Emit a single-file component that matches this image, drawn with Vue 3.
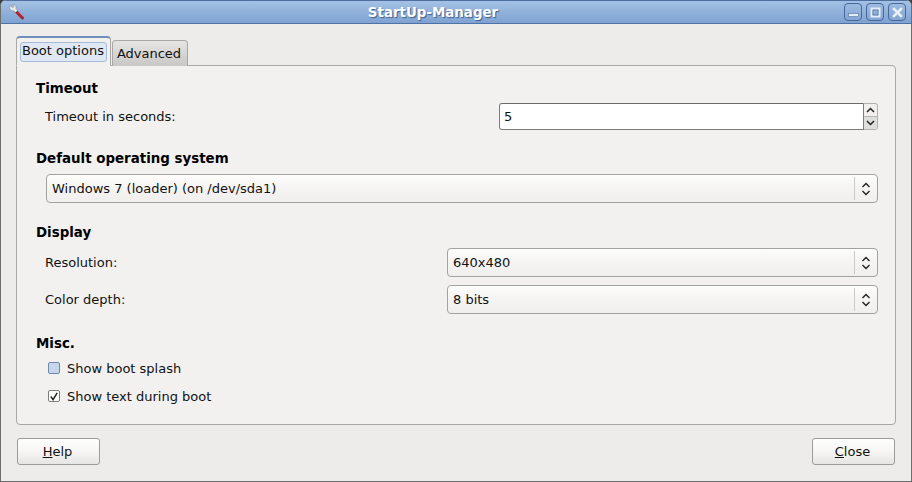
<template>
  <div class="window">
    <div class="titlebar">
      <svg class="app-icon" width="18" height="18" viewBox="0 0 18 18">
        <path d="M9 9.5 L15.5 16" stroke="#b3222c" stroke-width="3" stroke-linecap="round" />
        <path d="M2.5 3 L5 5.5 L7 4.5 L5.5 2.5 C8 2 9.5 4 9 6.5 L10.5 8.5 L8.5 10.5 L6.5 8.8 C4 9.2 2 7 2.5 3 Z" fill="#e8e8e8" stroke="#8a8f96" stroke-width="0.6" />
      </svg>
      <span class="title">StartUp-Manager</span>
      <div class="win-buttons">
        <div class="win-btn">
          <svg width="11" height="11" viewBox="0 0 11 11"><rect x="0.5" y="6.5" width="10" height="3" fill="#e4edf7" stroke="#44648f" stroke-width="0.5" /></svg>
        </div>
        <div class="win-btn">
          <svg width="11" height="11" viewBox="0 0 11 11"><rect x="1.5" y="1.5" width="8" height="8" fill="none" stroke="#e4edf7" stroke-width="2" /><rect x="3" y="3" width="5" height="5" fill="none" stroke="#44648f" stroke-width="0.6" /></svg>
        </div>
        <div class="win-btn">
          <svg width="11" height="11" viewBox="0 0 11 11"><path d="M2 2 L9 9 M9 2 L2 9" stroke="#e8eff8" stroke-width="2.6" stroke-linecap="square" /></svg>
        </div>
      </div>
    </div>

    <div class="content">
      <div class="tabs">
        <div class="tab active"><span class="tab-focus">Boot options</span></div>
        <div class="tab">Advanced</div>
      </div>

      <div class="panel">
        <section class="group timeout">
          <h3>Timeout</h3>
          <div class="row">
            <label class="row-label">Timeout in seconds:</label>
            <div class="spin">
              <div class="spin-entry">5</div>
              <div class="spin-btns">
                <div class="spin-btn">
                  <svg width="9" height="6" viewBox="0 0 9 6"><path d="M1 5 L4.5 1.5 L8 5" fill="none" stroke="#222" stroke-width="1.5" /></svg>
                </div>
                <div class="spin-btn">
                  <svg width="9" height="6" viewBox="0 0 9 6"><path d="M1 1 L4.5 4.5 L8 1" fill="none" stroke="#222" stroke-width="1.5" /></svg>
                </div>
              </div>
            </div>
          </div>
        </section>

        <section class="group os">
          <h3>Default operating system</h3>
          <div class="combo wide">
            <span class="combo-text">Windows 7 (loader) (on /dev/sda1)</span>
            <span class="combo-sep"></span>
            <svg class="updown" width="10" height="14" viewBox="0 0 10 14"><path d="M1.5 5 L5 1.5 L8.5 5 M1.5 9 L5 12.5 L8.5 9" fill="none" stroke="#222" stroke-width="1.4" /></svg>
          </div>
        </section>

        <section class="group display">
          <h3>Display</h3>
          <div v-for="item in displayRows" :key="item.label" class="row display-row">
            <label class="row-label">{{ item.label }}</label>
            <div class="combo half">
              <span class="combo-text">{{ item.value }}</span>
              <span class="combo-sep"></span>
              <svg class="updown" width="10" height="14" viewBox="0 0 10 14"><path d="M1.5 5 L5 1.5 L8.5 5 M1.5 9 L5 12.5 L8.5 9" fill="none" stroke="#222" stroke-width="1.4" /></svg>
            </div>
          </div>
        </section>

        <section class="group misc">
          <h3>Misc.</h3>
          <div class="check-row">
            <span class="check hover"></span>
            <span>Show boot splash</span>
          </div>
          <div class="check-row">
            <span class="check">
              <svg width="11" height="11" viewBox="0 0 11 11"><path d="M2 5.5 L4.5 9 L9 1.5" fill="none" stroke="#222" stroke-width="1.6" /></svg>
            </span>
            <span>Show text during boot</span>
          </div>
        </section>
      </div>

      <div class="actions">
        <button class="btn"><u>H</u>elp</button>
        <button class="btn"><u>C</u>lose</button>
      </div>
    </div>
  </div>
</template>

<script setup>
const displayRows = [
  { label: "Resolution:", value: "640x480" },
  { label: "Color depth:", value: "8 bits" },
];
</script>

<style>
html,
body {
  margin: 0;
  background: #3f3f3f;
}
</style>

<style scoped>
.window {
  width: 912px;
  height: 482px;
  box-sizing: border-box;
  display: flex;
  flex-direction: column;
  background: #edecea;
  border-left: 1px solid #6d6d6d;
  border-right: 1px solid #6d6d6d;
  border-bottom: 1px solid #6d6d6d;
  border-top-left-radius: 6px;
  border-top-right-radius: 6px;
  font-family: "DejaVu Sans", sans-serif;
  font-size: 13px;
  color: #111;
  overflow: hidden;
}

.titlebar {
  height: 24px;
  flex: none;
  display: flex;
  align-items: center;
  justify-content: center;
  position: relative;
  background: linear-gradient(#a4c1e4, #7fa2d2);
  border-top: 1px solid #4f6f9f;
  border-bottom: 1px solid #4f72a6;
  box-sizing: border-box;
  padding-right: 46px;
}

.app-icon {
  position: absolute;
  left: 6px;
  top: 1px;
}

.title {
  font-weight: bold;
  font-size: 13.4px;
  color: #fff;
  text-shadow: 1px 1px 1px #3d5d8d;
}

.win-buttons {
  position: absolute;
  right: 5px;
  top: 2px;
  display: flex;
  gap: 4px;
}

.win-btn {
  width: 18px;
  height: 18px;
  box-sizing: border-box;
  border: 1px solid #48689a;
  border-radius: 4px;
  background: linear-gradient(#9dbbe0, #82a5d4);
  display: flex;
  align-items: center;
  justify-content: center;
}

.content {
  flex: 1;
  display: flex;
  flex-direction: column;
  padding: 12px 15px 16px 15px;
}

.tabs {
  display: flex;
  align-items: flex-end;
  height: 30px;
  margin-bottom: -1px;
  position: relative;
  z-index: 1;
}

.tab {
  width: 76px;
  height: 26px;
  box-sizing: border-box;
  border: 1px solid #a8a8a6;
  border-bottom: none;
  border-radius: 4px 4px 0 0;
  background: linear-gradient(#e6e5e3, #c8c7c5);
  display: flex;
  align-items: center;
  justify-content: center;
  margin-left: 1px;
  padding-right: 2px;
}

.tab.active {
  width: 95px;
  height: 30px;
  margin-left: 0;
  background: #f2f1f0;
  border-color: #6f8fbd;
  border-top: 2px solid #6f8fbd;
  border-bottom: 1px solid #f2f1f0;
  border-left-color: #a8a8a6;
  border-right-color: #a8a8a6;
  padding: 0 0 2px;
  align-items: flex-start;
}

.tab-focus {
  display: block;
  width: 87px;
  height: 20px;
  box-sizing: border-box;
  margin-top: 4px;
  padding-left: 1px;
  line-height: 15px;
  border: 1px solid #a4bcd8;
  border-radius: 3px;
  background: #dfe8f3;
}

.panel {
  width: 880px;
  height: 360px;
  box-sizing: border-box;
  background: #f2f1f0;
  border: 1px solid #a8a8a6;
  border-radius: 0 4px 4px 4px;
  padding: 14px 17px 0 19px;
  display: flex;
  flex-direction: column;
}

h3 {
  margin: 0;
  padding-bottom: 1px;
  font-size: 13.4px;
  font-weight: bold;
  line-height: 17px;
  color: #000;
}

.row {
  display: flex;
  align-items: center;
  justify-content: space-between;
  padding-left: 9px;
}

.timeout .row {
  margin-top: 5px;
}

.spin {
  display: flex;
  height: 27px;
}

.spin-entry {
  width: 365px;
  box-sizing: border-box;
  background: #fff;
  border: 1px solid #7c7c7a;
  border-top-color: #6a6a68;
  padding-left: 4px;
  line-height: 25px;
  border-radius: 3px 0 0 3px;
}

.spin-btns {
  width: 14px;
  box-sizing: border-box;
  display: flex;
  flex-direction: column;
  border: 1px solid #b0b0ae;
  border-left: none;
  border-radius: 0 3px 3px 0;
  background: #f1f0ee;
}

.spin-btn {
  flex: 1;
  display: flex;
  align-items: center;
  justify-content: center;
}

.spin-btn + .spin-btn {
  border-top: 1px solid #b8b8b6;
  background: #dededc;
}

.os {
  margin-top: 20px;
}

.combo {
  height: 29px;
  box-sizing: border-box;
  display: flex;
  align-items: center;
  border: 1px solid #a2a2a0;
  border-radius: 4px;
  background: linear-gradient(#fdfdfc 0%, #f5f4f3 50%, #f0efed 100%);
  padding-left: 5px;
}

.combo.wide {
  margin: 6px 0 0 10px;
}

.combo.half {
  width: 431px;
}

.combo-text {
  flex: 1;
}

.combo-sep {
  width: 1px;
  height: 23px;
  background: #c9c9c7;
}

.updown {
  margin: 0 6px 0 6px;
}

.display {
  margin-top: 21px;
}

.display-row {
  margin-top: 8px;
}

.display h3 + .display-row {
  margin-top: 6px;
}

.misc {
  margin-top: 21px;
}

.check-row {
  display: flex;
  align-items: center;
  gap: 7px;
  height: 18px;
  padding-left: 12px;
  margin-top: 10px;
}

.misc h3 + .check-row {
  margin-top: 6px;
}

.check {
  width: 12px;
  height: 12px;
  box-sizing: border-box;
  border: 1px solid #7c7c7a;
  border-radius: 2px;
  background: #fff;
  display: flex;
  align-items: center;
  justify-content: center;
}

.check.hover {
  background: #c5d7ee;
  border-color: #6f88a8;
}

.actions {
  display: flex;
  justify-content: space-between;
  margin-top: 13px;
  padding-left: 1px;
  width: 878px;
}

.btn {
  width: 83px;
  height: 27px;
  box-sizing: border-box;
  border: 1px solid #9c9c9a;
  border-radius: 3px;
  background: linear-gradient(#ffffff 0%, #f7f6f5 50%, #e6e5e3 100%);
  font-family: inherit;
  font-size: 13px;
  color: #111;
  padding: 0 2px 0 0;
}
</style>
